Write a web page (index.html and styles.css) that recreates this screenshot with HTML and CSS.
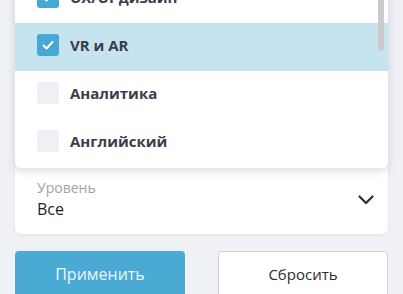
FILE: index.html
```html
<!DOCTYPE html>
<html lang="ru">
<head>
<meta charset="utf-8">
<link rel="stylesheet" href="styles.css">
</head>
<body>
<main class="filters">
  <div class="field">
    <div class="dropdown">
      <ul class="options">
        <li class="option"><span class="box checked"><svg viewBox="0 0 22 22"><polyline points="6.5,11.5 9.5,14.5 15.5,8"/></svg></span><span class="opt-label">UI/UX-дизайн</span></li>
        <li class="option"><span class="box checked"><svg viewBox="0 0 22 22"><polyline points="6.5,11.5 9.5,14.5 15.5,8"/></svg></span><span class="opt-label">UX/UI-дизайн</span></li>
        <li class="option active"><span class="box checked"><svg viewBox="0 0 22 22"><polyline points="6.5,11.5 9.5,14.5 15.5,8"/></svg></span><span class="opt-label">VR и AR</span></li>
        <li class="option"><span class="box"></span><span class="opt-label">Аналитика</span></li>
        <li class="option"><span class="box"></span><span class="opt-label">Английский</span></li>
      </ul>
      <div class="scrollbar"></div>
    </div>
    <div class="select-card">
      <div class="select-text">
        <div class="select-label">Уровень</div>
        <div class="select-value">Все</div>
      </div>
      <svg class="chevron" viewBox="0 0 16 10"><polyline points="1.5,1.5 8,8 14.5,1.5"/></svg>
    </div>
  </div>
  <div class="actions">
    <button class="btn btn-primary">Применить</button>
    <button class="btn btn-secondary">Сбросить</button>
  </div>
</main>
</body>
</html>
```
FILE: styles.css
```css
* { box-sizing: border-box; }
html, body { margin: 0; height: 100%; overflow: hidden; }
body {
  background: #eff1f5;
  font-family: "Open Sans", "Noto Sans", sans-serif;
  color: #2b2b36;
}
.filters {
  padding: 163px 15px 0;
  display: flex;
  flex-direction: column;
  gap: 17px;
}
.field { position: relative; }
.select-card {
  background: #fff;
  border-radius: 6px;
  box-shadow: 0 1px 3px rgba(40, 50, 70, 0.08);
  padding: 15px 14px 14px 22px;
  display: flex;
  align-items: center;
  justify-content: space-between;
}
.select-label {
  font-size: 14px;
  line-height: 20px;
  color: #a2a3aa;
}
.select-value {
  font-size: 16px;
  line-height: 22px;
  color: #1f1f27;
}
.chevron {
  width: 16px;
  height: 10px;
  fill: none;
  stroke: #2a2d3a;
  stroke-width: 2.2;
  stroke-linecap: round;
  stroke-linejoin: round;
  margin-top: 2px;
}
.dropdown {
  position: absolute;
  left: 0;
  right: 0;
  bottom: calc(100% - 5px);
  background: #fff;
  border-radius: 6px;
  box-shadow: 0 3px 8px rgba(30, 40, 60, 0.16);
  overflow: hidden;
  z-index: 2;
  padding-bottom: 1px;
}
.options { list-style: none; margin: 0; padding: 0; }
.option {
  height: 48px;
  display: flex;
  align-items: center;
  gap: 11px;
  padding: 0 22px 5px;
}
.option.active { background: #c6e4f0; }
.box {
  width: 22px;
  height: 22px;
  border-radius: 3px;
  background: #eef0f5;
  flex: none;
  display: flex;
}
.box.checked { background: #47a8d5; }
.box svg {
  width: 22px;
  height: 22px;
  fill: none;
  stroke: #fff;
  stroke-width: 2;
  stroke-linecap: round;
  stroke-linejoin: round;
}
.opt-label {
  font-size: 15px;
  font-weight: 700;
  color: #3b3c4a;
}
.scrollbar {
  position: absolute;
  right: 4px;
  top: 0;
  bottom: 117px;
  width: 6px;
  border-radius: 3px;
  background: #cbcbcd;
}
.actions {
  display: grid;
  grid-template-columns: 1fr 1fr;
  gap: 33px;
}
.btn {
  height: 48px;
  border-radius: 4px;
  font-family: inherit;
  font-size: 16px;
  padding: 0 0 2px;
}
.btn-primary {
  background: #4aaad4;
  border: none;
  color: #eaf6fb;
}
.btn-secondary {
  background: #fff;
  border: 1px solid #cfd3d9;
  color: #2b2b33;
  font-size: 15px;
}
```
